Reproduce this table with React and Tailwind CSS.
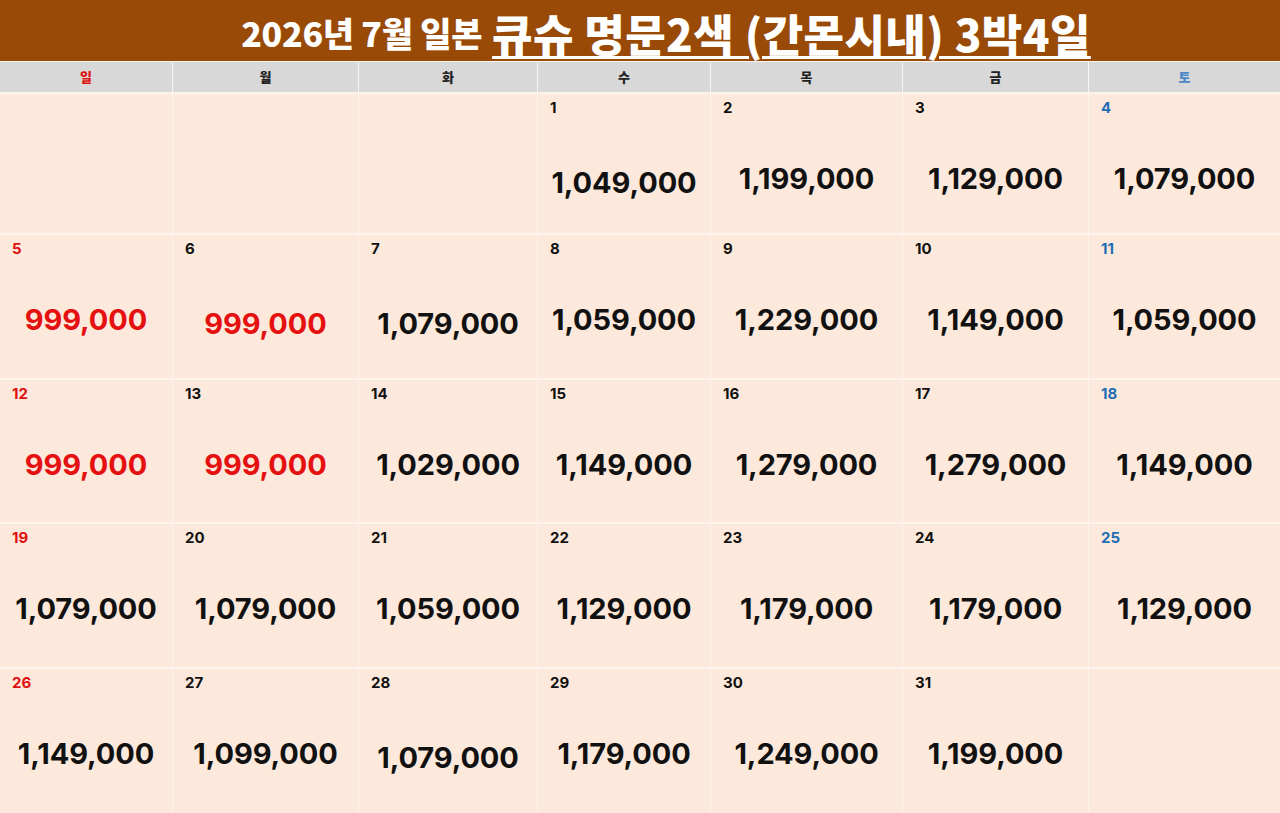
import React from "react";

const days = ["일", "월", "화", "수", "목", "금", "토"];

// price per day of the month, July 2026
const prices = {
  1: "1,049,000", 2: "1,199,000", 3: "1,129,000", 4: "1,079,000",
  5: "999,000", 6: "999,000", 7: "1,079,000", 8: "1,059,000", 9: "1,229,000", 10: "1,149,000", 11: "1,059,000",
  12: "999,000", 13: "999,000", 14: "1,029,000", 15: "1,149,000", 16: "1,279,000", 17: "1,279,000", 18: "1,149,000",
  19: "1,079,000", 20: "1,079,000", 21: "1,059,000", 22: "1,129,000", 23: "1,179,000", 24: "1,179,000", 25: "1,129,000",
  26: "1,149,000", 27: "1,099,000", 28: "1,079,000", 29: "1,179,000", 30: "1,249,000", 31: "1,199,000",
};

const lower = [1, 6, 7, 28];

const weeks = [
  [null, null, null, 1, 2, 3, 4],
  [5, 6, 7, 8, 9, 10, 11],
  [12, 13, 14, 15, 16, 17, 18],
  [19, 20, 21, 22, 23, 24, 25],
  [26, 27, 28, 29, 30, 31, null],
];

function Cell({ day, col }) {
  if (!day) return <div className="bg-[#fde9db]" />;
  const price = prices[day];
  const cheap = price === "999,000";
  const numColor = col === 0 ? "text-[#e01010]" : col === 6 ? "text-[#1f6db3]" : "text-[#111]";
  return (
    <div className="bg-[#fde9db] flex flex-col px-[12px] pt-[4px]">
      <p className={`text-[15px] font-bold leading-5 ${numColor}`}>{day}</p>
      <p
        className={`text-center text-[29px] font-bold tracking-[-0.1px] leading-9 ${
          lower.includes(day) ? "mt-[47px]" : "mt-[43px]"
        } ${cheap ? "text-[#e51010]" : "text-[#111]"}`}
      >
        {price}
      </p>
    </div>
  );
}

export default function App() {
  return (
    <div
      className="w-[1280px] h-[813px] bg-[#fdf4ee] flex flex-col overflow-hidden"
      style={{ fontFamily: "Inter, 'Noto Sans CJK KR', sans-serif" }}
    >
      {/* Title */}
      <div className="h-[61px] bg-[#994a06] flex items-end justify-center pb-[3px] pl-[52px] gap-[10px] text-white">
        <span className="text-[34px] font-black leading-[50px] tracking-[-0.3px]" style={{ fontFamily: "'Noto Sans CJK KR', sans-serif" }}>
          2026년 7월 일본
        </span>
        <span
          className="text-[44px] font-black leading-[50px] underline decoration-[3px] underline-offset-[4px] tracking-[0.4px]"
          style={{ fontFamily: "'Noto Sans CJK KR', sans-serif" }}
        >
          큐슈 명문2색 (간몬시내) 3박4일
        </span>
      </div>

      {/* Weekday header */}
      <div className="grid grid-cols-[172px_185px_178px_172px_191px_185px_1fr] gap-x-[1px] h-[30px] mt-[1px]">
        {days.map((d, i) => (
          <div
            key={d}
            className={`bg-[#d8d8d8] flex items-center justify-center text-[13px] font-black ${
              i === 0 ? "text-[#e01010]" : i === 6 ? "text-[#4a86c8]" : "text-[#222]"
            }`}
            style={{ fontFamily: "'Noto Sans CJK KR', sans-serif" }}
          >
            {d}
          </div>
        ))}
      </div>

      {/* Calendar body */}
      <div className="grid grid-cols-[172px_185px_178px_172px_191px_185px_1fr] grid-rows-[139px_143px_142px_143px_1fr] gap-x-[1px] gap-y-[2px] mt-[2px] flex-1">
        {weeks.map((w, r) =>
          w.map((d, c) => <Cell key={`${r}-${c}`} day={d} col={c} />)
        )}
      </div>
    </div>
  );
}
